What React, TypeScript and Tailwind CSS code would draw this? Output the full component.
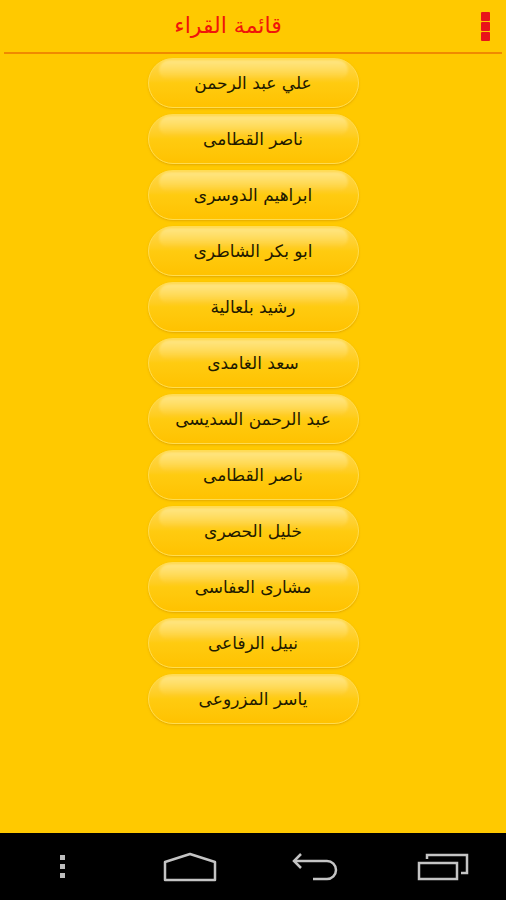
import React from "react";

const readers = [
  "علي عبد الرحمن",
  "ناصر القطامى",
  "ابراهيم الدوسرى",
  "ابو بكر الشاطرى",
  "رشيد بلعالية",
  "سعد الغامدى",
  "عبد الرحمن السديسى",
  "ناصر القطامى",
  "خليل الحصرى",
  "مشارى العفاسى",
  "نبيل الرفاعى",
  "ياسر المزروعى",
];

function NavDots() {
  return (
    <svg width="8" height="26" viewBox="0 0 8 26">
      <rect x="1" y="1" width="5" height="5" fill="#bdbdbd" />
      <rect x="1" y="10" width="5" height="5" fill="#bdbdbd" />
      <rect x="1" y="19" width="5" height="5" fill="#bdbdbd" />
    </svg>
  );
}

function NavHome() {
  return (
    <svg width="54" height="30" viewBox="0 0 54 30" fill="none" stroke="#c4c4c4" strokeWidth="2.5">
      <path d="M2 28 V10 L27 2 L52 10 V28 Z" strokeLinejoin="round" />
    </svg>
  );
}

function NavBack() {
  return (
    <svg width="50" height="30" viewBox="0 0 50 30" fill="none" stroke="#c4c4c4" strokeWidth="2.5">
      <path d="M3 9 H36 A9 9 0 0 1 36 27 H22" />
      <path d="M10 2 L3 9 L10 16" />
    </svg>
  );
}

function NavRecent() {
  return (
    <svg width="52" height="28" viewBox="0 0 52 28" fill="none" stroke="#c4c4c4" strokeWidth="2.5">
      <rect x="2" y="10" width="38" height="16" />
      <path d="M10 6 V2 H50 V20 H44" />
    </svg>
  );
}

export default function App() {
  return (
    <div className="w-[506px] h-[900px] flex flex-col bg-[#ffc900] overflow-hidden" style={{ fontFamily: '"DejaVu Sans", sans-serif' }}>
      <div className="h-[52px] relative flex items-center justify-center pr-[50px]">
        <span dir="rtl" className="text-[22px] text-[#f0140a] leading-none">قائمة القراء</span>
        <div className="absolute right-[16px] top-[12px] flex flex-col gap-[1px]">
          <div className="w-[9px] h-[9px] bg-[#e8141a] rounded-[1px]" />
          <div className="w-[9px] h-[9px] bg-[#e8141a] rounded-[1px]" />
          <div className="w-[9px] h-[9px] bg-[#e8141a] rounded-[1px]" />
        </div>
      </div>
      <div className="mx-[4px] h-[2px] bg-[#f08a00]" />
      <div className="flex-1 flex flex-col items-center pt-[4px] gap-[6px]">
        {readers.map((name, i) => (
          <div
            key={i}
            dir="rtl"
            className="relative w-[211px] h-[50px] rounded-[25px] flex items-center justify-center border border-[#ffdc50] bg-gradient-to-b from-[#ffd84a] via-[#ffcb10] to-[#ffc200] shadow-[0_1px_2px_rgba(200,140,0,0.5)] text-[17px] text-[#1f1a00]"
          >
            <div className="absolute left-[10px] right-[10px] top-[1px] h-[20px] rounded-[14px] bg-gradient-to-b from-[#ffe582] to-[#ffd22e00] blur-[1px]" />
            <span className="relative pt-[2px]">{name}</span>
          </div>
        ))}
      </div>
      <div className="h-[67px] bg-black flex items-center">
        <div className="flex-1 flex justify-center"><NavDots /></div>
        <div className="flex-1 flex justify-center"><NavHome /></div>
        <div className="flex-1 flex justify-center"><NavBack /></div>
        <div className="flex-1 flex justify-center"><NavRecent /></div>
      </div>
    </div>
  );
}
